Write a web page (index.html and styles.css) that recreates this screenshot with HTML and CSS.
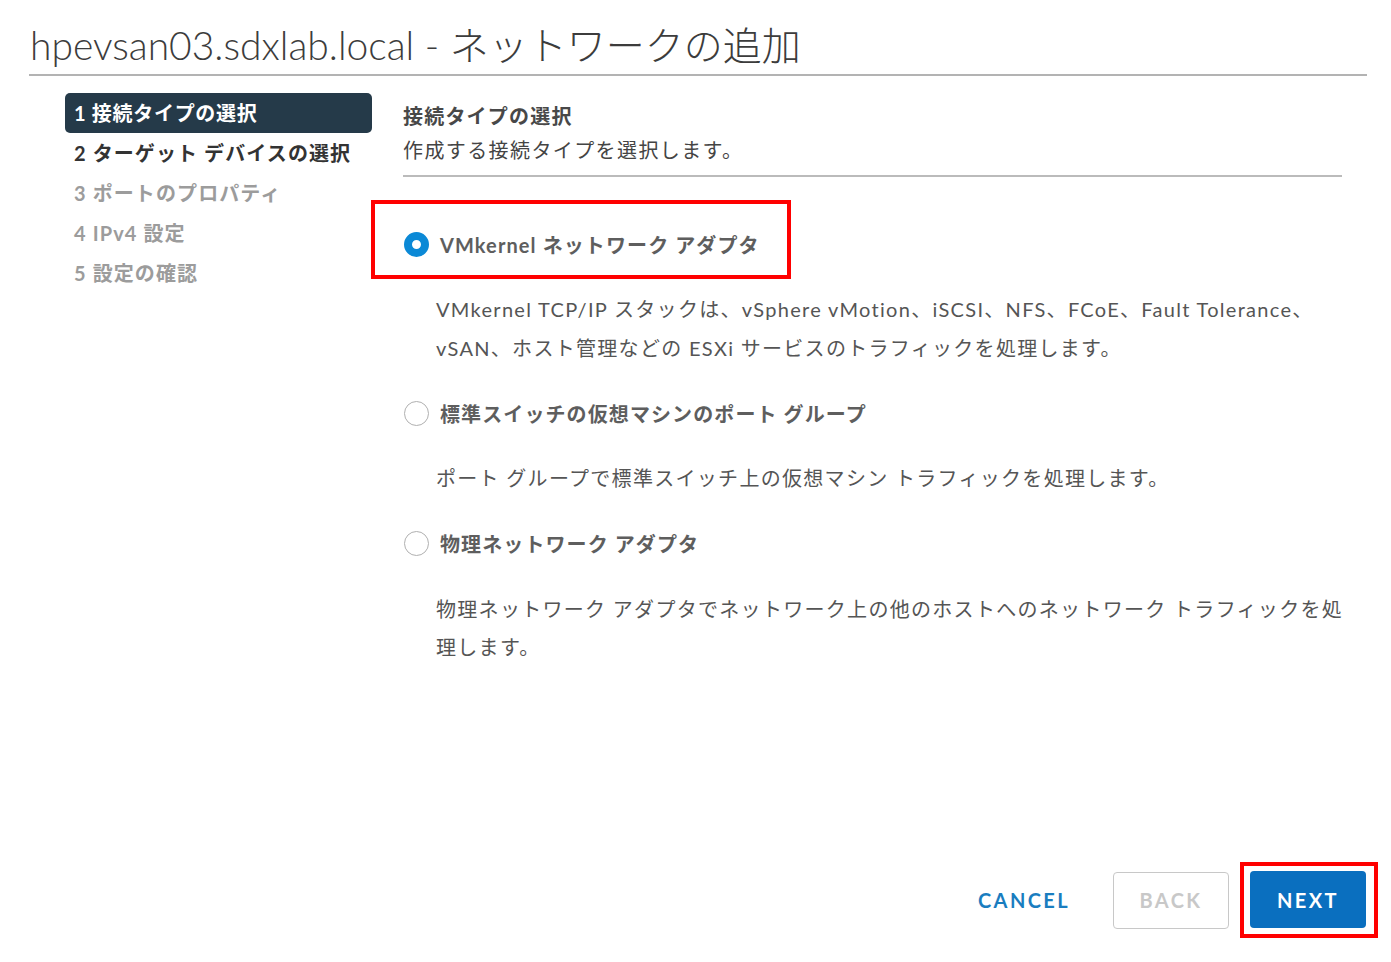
FILE: index.html
```html
<!DOCTYPE html>
<html lang="ja">
<head>
    <meta charset="UTF-8">
    <meta name="viewport" content="width=device-width, initial-scale=1.0">
    <title>ネットワークの追加</title>
    <link rel="stylesheet" href="styles.css">
</head>
<body>
    <div class="wizard">
        <h1 class="wizard-title">hpevsan03.sdxlab.local - ネットワークの追加</h1>

        <div class="wizard-body">
            <!-- Step list -->
            <nav class="steps">
                <div class="step active">1 接続タイプの選択</div>
                <div class="step">2 ターゲット デバイスの選択</div>
                <div class="step disabled">3 ポートのプロパティ</div>
                <div class="step disabled">4 IPv4 設定</div>
                <div class="step disabled">5 設定の確認</div>
            </nav>

            <main class="step-content">
                <div class="step-header">
                    <div class="step-heading">接続タイプの選択</div>
                    <div class="step-sub">作成する接続タイプを選択します。</div>
                </div>

                <div class="options">
                    <div class="option">
                        <label class="option-head marked">
                            <input type="radio" name="conn" checked>
                            <span>VMkernel ネットワーク アダプタ</span>
                        </label>
                        <p class="option-desc">VMkernel TCP/IP スタックは、vSphere vMotion、iSCSI、NFS、FCoE、Fault Tolerance、vSAN、ホスト管理などの ESXi サービスのトラフィックを処理します。</p>
                    </div>
                    <div class="option">
                        <label class="option-head">
                            <input type="radio" name="conn">
                            <span>標準スイッチの仮想マシンのポート グループ</span>
                        </label>
                        <p class="option-desc">ポート グループで標準スイッチ上の仮想マシン トラフィックを処理します。</p>
                    </div>
                    <div class="option">
                        <label class="option-head">
                            <input type="radio" name="conn">
                            <span>物理ネットワーク アダプタ</span>
                        </label>
                        <p class="option-desc">物理ネットワーク アダプタでネットワーク上の他のホストへのネットワーク トラフィックを処理します。</p>
                    </div>
                </div>
            </main>
        </div>

        <footer class="wizard-footer">
            <button class="btn btn-link">CANCEL</button>
            <button class="btn btn-outline" disabled>BACK</button>
            <span class="mark-box">
                <button class="btn btn-primary">NEXT</button>
            </span>
        </footer>
    </div>
</body>
</html>
```

FILE: styles.css
```css
/* Add network wizard */
body {
    margin: 0;
    background: #fff;
    font-family: "Lato", "Noto Sans CJK JP", sans-serif;
    color: #333;
}

.wizard {
    height: 962px;
    box-sizing: border-box;
    display: flex;
    flex-direction: column;
    padding: 0 24px 24px 29px;
}

.wizard-title {
    margin: 0;
    padding: 21px 0 5px 1px;
    font-size: 39px;
    font-weight: 300;
    line-height: 48px;
    color: #3c3c3c;
    border-bottom: 2px solid #b3b3b3;
    white-space: nowrap;
}

.wizard-body {
    display: flex;
    margin-top: 17px;
}

/* Left step list */
.steps {
    width: 307px;
    margin-left: 36px;
}

.step {
    height: 40px;
    line-height: 40px;
    padding-left: 9px;
    font-size: 20px;
    font-weight: 700;
    letter-spacing: 1.1px;
    color: #333;
    border-radius: 5px;
    white-space: nowrap;
}

.step.active {
    background-color: #253a49;
    color: #fff;
    letter-spacing: 0.7px;
}

.step.disabled {
    color: #9c9c9c;
}

/* Right content */
.step-content {
    width: 939px;
    margin-left: 31px;
}

.step-header {
    padding-top: 6px;
    padding-bottom: 8px;
    border-bottom: 2px solid #bbb;
}

.step-heading {
    font-size: 20px;
    line-height: 34px;
    font-weight: 700;
    letter-spacing: 1.2px;
    color: #484848;
}

.step-sub {
    font-size: 20px;
    line-height: 34px;
    letter-spacing: 1.4px;
    color: #444;
}

.options {
    padding-top: 47px;
}

.option + .option {
    margin-top: 26px;
}

.option-head {
    position: relative;
    display: flex;
    align-items: center;
    height: 40px;
    font-size: 20px;
    font-weight: 700;
    letter-spacing: 1.1px;
    color: #5e5e5e;
}

.option-head input {
    appearance: none;
    -webkit-appearance: none;
    box-sizing: border-box;
    width: 25px;
    height: 25px;
    margin: 0 11px 0 1px;
    border: 1.5px solid #b0b0b0;
    border-radius: 50%;
    background: #fff;
}

.option-head input:checked {
    border: 8.5px solid #0b89d6;
}

/* Red annotation boxes */
.option-head.marked::after {
    content: "";
    position: absolute;
    left: -32px;
    top: -24px;
    width: 420px;
    height: 79px;
    box-sizing: border-box;
    border: 4px solid #f00;
}

.mark-box {
    display: flex;
    padding: 5px 8px 6px 6px;
    border: 4px solid #f00;
}

.option-desc {
    margin: 26px -8px 0 0;
    padding-left: 33px;
    font-size: 20px;
    line-height: 38.5px;
    letter-spacing: 1.3px;
    color: #555;
}

/* Footer buttons */
.wizard-footer {
    margin-top: auto;
    margin-right: -11px;
    display: flex;
    justify-content: flex-end;
    align-items: center;
}

.btn {
    box-sizing: border-box;
    width: 116px;
    height: 57px;
    border-radius: 4px;
    font-family: "Lato", sans-serif;
    font-size: 20px;
    font-weight: 700;
    letter-spacing: 0.12em;
    cursor: pointer;
}

.btn-link {
    margin-right: 31px;
    border: none;
    background: transparent;
    color: #1a7dbf;
}

.btn-outline {
    margin-right: 11px;
    border: 1.5px solid #c8c8c8;
    background: #fff;
    color: #c8c8c8;
}

.btn-primary {
    border: none;
    background-color: #0a6fbf;
    color: #fff;
}
```
